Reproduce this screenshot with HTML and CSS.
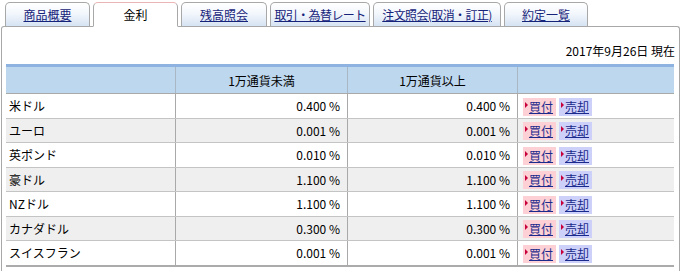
FILE: index.html
```html
<!DOCTYPE html>
<html lang="ja">
<head>
  <meta charset="UTF-8">
  <title>金利</title>
  <link rel="stylesheet" href="styles.css">
</head>
<body>
  <div class="tabs">
    <a class="tab w85" href="#">商品概要</a>
    <span class="tab w85 active">金利</span>
    <a class="tab w86" href="#">残高照会</a>
    <a class="tab w100 tight" href="#">取引・為替レート</a>
    <a class="tab w128 tight" href="#">注文照会(取消・訂正)</a>
    <a class="tab w84" href="#">約定一覧</a>
  </div>

  <div class="panel">
    <p class="asof">2017年9月26日 現在</p>
    <table class="rates">
      <tr>
        <th class="c1"></th>
        <th class="c2">1万通貨未満</th>
        <th class="c3">1万通貨以上</th>
        <th class="c4"></th>
      </tr>
      <tr>
        <td class="name">米ドル</td><td class="num">0.400 %</td><td class="num">0.400 %</td>
        <td class="act"><a class="btn buy" href="#"><i></i>買付</a><a class="btn sell" href="#"><i></i>売却</a></td>
      </tr>
      <tr class="alt">
        <td class="name">ユーロ</td><td class="num">0.001 %</td><td class="num">0.001 %</td>
        <td class="act"><a class="btn buy" href="#"><i></i>買付</a><a class="btn sell" href="#"><i></i>売却</a></td>
      </tr>
      <tr>
        <td class="name">英ポンド</td><td class="num">0.010 %</td><td class="num">0.010 %</td>
        <td class="act"><a class="btn buy" href="#"><i></i>買付</a><a class="btn sell" href="#"><i></i>売却</a></td>
      </tr>
      <tr class="alt">
        <td class="name">豪ドル</td><td class="num">1.100 %</td><td class="num">1.100 %</td>
        <td class="act"><a class="btn buy" href="#"><i></i>買付</a><a class="btn sell" href="#"><i></i>売却</a></td>
      </tr>
      <tr>
        <td class="name">NZドル</td><td class="num">1.100 %</td><td class="num">1.100 %</td>
        <td class="act"><a class="btn buy" href="#"><i></i>買付</a><a class="btn sell" href="#"><i></i>売却</a></td>
      </tr>
      <tr class="alt">
        <td class="name">カナダドル</td><td class="num">0.300 %</td><td class="num">0.300 %</td>
        <td class="act"><a class="btn buy" href="#"><i></i>買付</a><a class="btn sell" href="#"><i></i>売却</a></td>
      </tr>
      <tr>
        <td class="name">スイスフラン</td><td class="num">0.001 %</td><td class="num">0.001 %</td>
        <td class="act"><a class="btn buy" href="#"><i></i>買付</a><a class="btn sell" href="#"><i></i>売却</a></td>
      </tr>
    </table>
  </div>
</body>
</html>
```

FILE: styles.css
```css
body {
  margin: 0;
  padding: 0;
  font-family: "Noto Sans CJK JP", "DejaVu Sans", sans-serif;
  font-size: 12px;
  color: #000;
  background: #fff;
}
.tabs {
  display: flex;
  gap: 3px;
  padding-left: 5px;
  margin-top: 2px;
  margin-bottom: -1px;
}
.tab {
  display: block;
  height: 23px;
  line-height: 23px;
  text-align: center;
  white-space: nowrap;
  color: #16237a;
  text-decoration: underline;
  background: linear-gradient(#ffffff 0%, #f3f7fc 45%, #d6e3f3 100%);
  border: 1px solid #a8a8a8;
  border-bottom: none;
  border-radius: 5px 5px 0 0;
}
.tab.tight {
  letter-spacing: -0.6px;
}
.tab.active {
  position: relative;
  z-index: 1;
  color: #000;
  text-decoration: none;
  background: #fff;
  border-top-color: #ebb5b5;
  border-bottom: 1px solid #fff;
}
.w85 { width: 83px; }
.w86 { width: 84px; }
.w100 { width: 98px; }
.w128 { width: 126px; }
.w84 { width: 82px; }
.panel {
  margin-left: 1px;
  border: 1px solid #a8a8a8;
  border-bottom: none;
  border-radius: 3px 3px 0 0;
  padding: 0 4px 0 4px;
  height: 250px;
}
.asof {
  margin: 0;
  padding-top: 16px;
  line-height: 16px;
  text-align: right;
}
.rates {
  margin-top: 5px;
  width: 668px;
  border-collapse: collapse;
  table-layout: fixed;
  border-top: 3px solid #8fb3e0;
  border-bottom: 2px solid #ababab;
}
.rates th {
  height: 26px;
  padding: 0;
  font-weight: normal;
  background: #bdd7ee;
  border-left: 1px solid #a9b6c4;
  border-bottom: 1px solid #a9a9a9;
}
.rates th:first-child { border-left: none; }
.c1 { width: 169px; }
.c2 { width: 171px; }
.c3 { width: 169px; }
.rates td {
  height: 23.5px;
  padding: 0;
  border-left: 1px solid #a9a9a9;
  border-bottom: 1px solid #c4c4c4;
}
.rates td:first-child { border-left: none; }
.rates tr:last-child td { border-bottom: none; }
.rates tr.alt td { background: #efefef; }
.name { padding-left: 3px !important; }
.num {
  text-align: right;
  padding-right: 7px !important;
}
.act {
  padding-left: 5px !important;
  white-space: nowrap;
}
.btn {
  display: inline-flex;
  align-items: center;
  width: 33px;
  height: 18px;
  line-height: 16px;
  box-sizing: border-box;
  padding-left: 2px;
  margin-right: 3px;
  vertical-align: middle;
  color: #1a2a8c;
  text-decoration: underline;
}
.btn i {
  width: 0;
  height: 0;
  border-left: 3px solid #c8003c;
  border-top: 3px solid transparent;
  border-bottom: 3px solid transparent;
  margin-right: 1px;
  margin-top: -4px;
}
.buy { background: #fcd0d4; }
.sell { background: #cdd0f8; }
```
